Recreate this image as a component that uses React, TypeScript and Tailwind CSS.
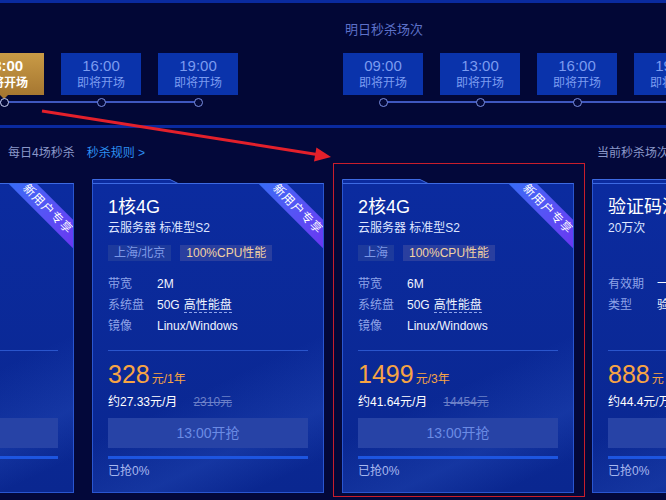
import React from 'react';

type Spec = { label: string; value: string; dashed?: string };
type CardProps = {
  title: string;
  sub: string;
  tags: string[];
  specs: Spec[];
  price: string;
  unit: string;
  monthly: string;
  orig?: string;
};

const SlotCol: React.FC<{ time: string; active?: boolean }> = ({ time, active }) => (
  <div className="w-[80px] shrink-0 flex flex-col items-center">
    {active ? (
      <div className="relative h-[42px] w-full flex flex-col items-center justify-center bg-gradient-to-b from-[#c99b46] to-[#a67731] text-white font-bold">
        <span className="text-[15px] leading-[18px]">{time}</span>
        <span className="text-[12px] leading-[16px]">即将开场</span>
        <span className="absolute left-1/2 top-full -translate-x-1/2 w-0 h-0 border-x-[4px] border-x-transparent border-t-[4px] border-t-[#a67731]" />
      </div>
    ) : (
      <div className="h-[42px] w-full flex flex-col items-center justify-center bg-[#0a33ab] text-[#7b9bf0]">
        <span className="text-[15px] leading-[18px]">{time}</span>
        <span className="text-[12px] leading-[16px]">即将开场</span>
      </div>
    )}
    <div className="relative z-10 mt-[2px] h-[10px] flex items-center justify-center">
      <span
        className={
          active
            ? 'w-[9px] h-[9px] rounded-full border-[1.5px] border-[#c9d0f2] bg-[#030838]'
            : 'w-[9px] h-[9px] rounded-full border-[1.5px] border-[#7b8fe2] bg-[#030838]'
        }
      />
    </div>
  </div>
);

const Group: React.FC<{ label: string; active?: string; className: string }> = ({ label, active, className }) => (
  <div className={className}>
    <div className="text-[13px] leading-[20px] text-[#5d71c9] pl-[2px]">{label}</div>
    <div className="relative mt-[13px] flex gap-[17px]">
      <div className="absolute left-[40px] right-[40px] top-[48px] h-[2px] bg-[#3f57bf]" />
      {['09:00', '13:00', '16:00', '19:00'].map((t) => (
        <SlotCol key={t} time={t} active={t === active} />
      ))}
    </div>
  </div>
);

const Card: React.FC<CardProps> = ({ title, sub, tags, specs, price, unit, monthly, orig }) => (
  <div className="w-[232px] shrink-0 flex flex-col">
    <svg width="90" height="5" viewBox="0 0 90 5" className="block -mb-px">
      <path d="M0.5 5 V0.5 H78 L87 5" fill="#0b2b9f" stroke="#3d6ae2" />
    </svg>
    <div className="relative h-[310px] border border-[#2a56d0] border-t-[#3d6ae2] bg-gradient-to-b from-[#0b2b9f] to-[#0a2790] px-[15px] pt-[11px] overflow-hidden">
      <div className="absolute inset-0 bg-[linear-gradient(155deg,transparent_62%,rgba(70,120,235,0.18)_80%,transparent_92%)]" />
      <div className="absolute right-0 top-0 w-[70px] h-[70px] overflow-hidden">
        <div className="absolute left-[-6px] top-[15px] w-[102px] h-[20px] rotate-45 bg-gradient-to-r from-[#2f6df6] to-[#6b30f2] text-white text-[12px] leading-[20px] text-center tracking-[1px]">
          新用户专享
        </div>
      </div>
      <div className="relative">
        <div className="text-[18px] leading-[24px] text-white">{title}</div>
        <div className="mt-[1px] text-[12px] leading-[16px] text-[#dfe6ff]">{sub}</div>
        <div className="mt-[9px] h-[16px] flex gap-[9px] text-[12px] leading-[16px]">
          {tags.map((t, i) => (
            <span
              key={t}
              className={i === 0 ? 'px-[6px] bg-[#1d3a9c] text-[#7d98e6]' : 'px-[6px] bg-[#2a3f9f] text-[#f3d3a3]'}
            >
              {t}
            </span>
          ))}
        </div>
        <div className="mt-[13px] h-[63px] text-[12px] leading-[21px]">
          {specs.map((s) => (
            <div key={s.label} className="flex">
              <span className="w-[49px] text-[#8ea3e8]">{s.label}</span>
              <span className="text-[#f0f4ff] whitespace-nowrap">
                {s.value}
                {s.dashed && (
                  <span className="ml-[4px] border-b border-dashed border-[#8ea3e8]">{s.dashed}</span>
                )}
              </span>
            </div>
          ))}
        </div>
        <div className="mt-[13px] h-px bg-[#2a55cc]" />
        <div className="mt-[9px] h-[28px] flex items-baseline text-[#f7a444] whitespace-nowrap">
          <span className="text-[25px] leading-[28px]">{price}</span>
          <span className="ml-[2px] text-[12px]">{unit}</span>
        </div>
        <div className="mt-[6px] text-[12px] leading-[16px] text-white whitespace-nowrap">
          {monthly}
          {orig && <span className="ml-[16px] line-through text-[#6c80c8]">{orig}</span>}
        </div>
        <div className="mt-[8px] h-[30px] flex items-center justify-center bg-[#2743a6] text-[#6b8be4] text-[14px]">
          13:00开抢
        </div>
        <div className="mt-[8px] h-[3px] bg-[#1d55e0]" />
        <div className="mt-[4px] text-[12px] leading-[16px] text-[#a9b8ee]">已抢0%</div>
      </div>
    </div>
  </div>
);

const serverSpecs = (bw: string): Spec[] => [
  { label: '带宽', value: bw },
  { label: '系统盘', value: '50G', dashed: '高性能盘' },
  { label: '镜像', value: 'Linux/Windows' },
];

const App: React.FC = () => {
  return (
    <div className="relative w-[666px] h-[500px] overflow-hidden bg-[#03083a] font-['Liberation_Sans','Noto_Sans_CJK_SC',sans-serif]">
      {/* Sessions */}
      <div className="border-y-[3px] border-[#0a2a9e] bg-[#020736] pt-[17px] pb-[18px] flex">
        <Group label="今日秒杀场次" active="13:00" className="ml-[-133px] flex flex-col shrink-0" />
        <Group label="明日秒杀场次" className="ml-[105px] flex flex-col shrink-0" />
      </div>

      {/* Info row */}
      <div className="mt-[17px] pl-[8px] h-[16px] flex items-center text-[12px] leading-[16px] whitespace-nowrap">
        <div className="w-[589px] shrink-0 flex">
          <span className="text-[#8a97c9]">每日4场秒杀</span>
          <span className="ml-[12px] text-[#2d8ff0]">秒杀规则 &gt;</span>
        </div>
        <span className="shrink-0 text-[#8a97c9]">当前秒杀场次：13:00</span>
      </div>

      {/* Cards */}
      <div className="mt-[18px] ml-[-158px] flex gap-[18px] items-start">
        <Card
          title="1核2G"
          sub="云服务器 标准型S2"
          tags={['上海']}
          specs={serverSpecs('1M')}
          price="99"
          unit="元/1年"
          monthly="约8.25元/月"
          orig="1010元"
        />
        <Card
          title="1核4G"
          sub="云服务器 标准型S2"
          tags={['上海/北京', '100%CPU性能']}
          specs={serverSpecs('2M')}
          price="328"
          unit="元/1年"
          monthly="约27.33元/月"
          orig="2310元"
        />
        <Card
          title="2核4G"
          sub="云服务器 标准型S2"
          tags={['上海', '100%CPU性能']}
          specs={serverSpecs('6M')}
          price="1499"
          unit="元/3年"
          monthly="约41.64元/月"
          orig="14454元"
        />
        <Card
          title="验证码流量包"
          sub="20万次"
          tags={[]}
          specs={[
            { label: '有效期', value: '一年' },
            { label: '类型', value: '验证码短信' },
          ]}
          price="888"
          unit="元"
          monthly="约44.4元/万次"
          orig="1200元"
        />
      </div>

      {/* Annotation overlay */}
      <div className="absolute left-[333px] top-[163px] w-[252px] h-[334px] border border-[#c81e2c] pointer-events-none" />
      <svg className="absolute left-0 top-0 pointer-events-none" width="666" height="500" viewBox="0 0 666 500">
        <line x1="42" y1="111" x2="317" y2="154.5" stroke="#e3202b" strokeWidth="3" />
        <polygon points="331,157 314,161.6 316.4,147.4" fill="#e3202b" />
      </svg>
    </div>
  );
};

export default App;
